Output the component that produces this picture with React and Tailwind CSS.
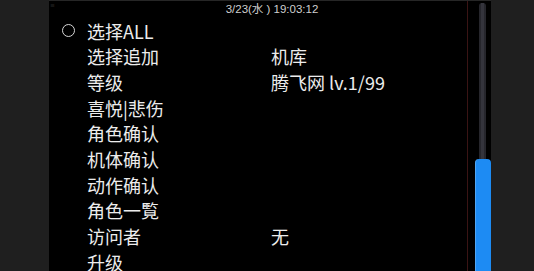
import React from "react";

const rows = [
  ["选择ALL", ""],
  ["选择追加", "机库"],
  ["等级", "腾飞网 lv.1/99"],
  ["喜悦|悲伤", ""],
  ["角色确认", ""],
  ["机体确认", ""],
  ["动作确认", ""],
  ["角色一覧", ""],
  ["访问者", "无"],
  ["升级", ""],
];

export default function App() {
  return (
    <div
      className="w-[534px] h-[271px] flex bg-[#1f1f1f] overflow-hidden"
      style={{ fontFamily: '"Noto Sans CJK SC", "Noto Sans", sans-serif' }}
    >
      <div className="w-[49px] h-full bg-[#1f1f1f]" />
      <div className="relative w-[442px] h-full bg-black border-t border-[#262626]">
        <div className="absolute left-[1px] top-[1px] text-[5px] leading-none text-[#555]">≡</div>
        <div
          className="h-[17px] flex justify-center pl-[4px] text-[11.5px] leading-[16px] text-[#cfcfcf]"
          style={{ fontFamily: '"Liberation Sans", "Noto Sans CJK JP", sans-serif' }}
        >
          3/23(水 ) 19:03:12
        </div>
        <div className="flex flex-col">
          {rows.map(([l, r], i) => (
            <div key={i} className="flex items-center h-[25.67px] text-[18px] leading-none text-[#ececec]">
              <div className="w-[38px] flex justify-center pl-[1px]">
                {i === 0 && (
                  <div className="w-[13px] h-[13px] rounded-full border-[1.5px] border-[#d8d8d8]" />
                )}
              </div>
              <div className="w-[184px]">{l}</div>
              <div>{r}</div>
            </div>
          ))}
        </div>
        <div className="absolute left-[418px] top-0 bottom-0 w-[1px] bg-[#3a1414]" />
        <div className="absolute left-[430px] top-[2px] bottom-0 w-[7px] rounded-t-[3px] bg-[#26262c] flex justify-center">
          <div className="w-[3px] h-full bg-[#34343c]" />
        </div>
        <div className="absolute left-[426px] top-[158px] bottom-0 w-[16px] rounded-t-[4px] bg-[#1d8bf3] border-l border-[#4fa6f5]" />
      </div>
      <div className="flex-1 h-full bg-[#1f1f1f]" />
    </div>
  );
}
